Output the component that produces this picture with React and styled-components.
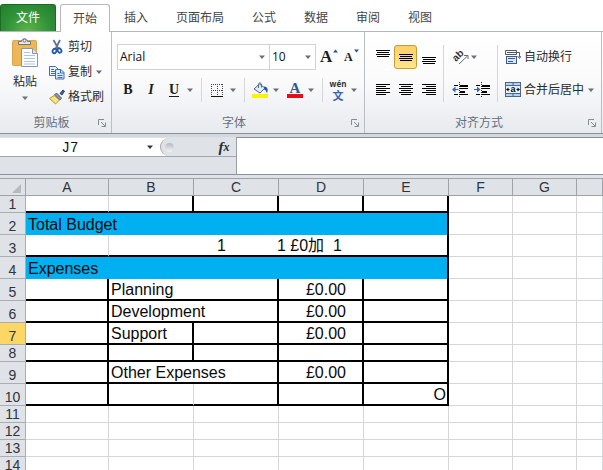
import React, { useState } from "react";
import styled, { createGlobalStyle, css } from "styled-components";

const GlobalStyle = createGlobalStyle`
  * { box-sizing: border-box; }
  body { margin: 0; background: #fff; }
  button, input, select {
    font: inherit; color: inherit; border: 0; padding: 0; margin: 0;
    background: none; outline-offset: -1px;
  }
`;

const ui = `"Open Sans", "Noto Sans CJK SC", sans-serif`;
const sans = `"Liberation Sans", "Noto Sans CJK SC", sans-serif`;
const serif = `"Liberation Serif", serif`;

const Window = styled.div`
  height: 100vh;
  overflow: hidden;
  display: flex;
  flex-direction: column;
  font: 12px/18px ${ui};
  color: #2b2b2b;
`;

/* Ribbon tabs */
const TabBar = styled.nav`
  display: flex;
  flex: none;
  height: 32px;
  padding-top: 4px;
  border-bottom: 1px solid #b3b7bd;
`;
const Tab = styled.button`
  flex: none;
  height: 27px;
  padding: 0 14px;
  color: #444;
`;
const FileTab = styled(Tab)`
  padding: 0 15px;
  margin-right: 4px;
  color: #fff;
  border: 1px solid #1d6b22;
  border-bottom: 0;
  border-radius: 3px 3px 0 0;
  background: radial-gradient(ellipse at 50% 100%, #5cb548, #2f9038 60%, #23802d);
`;
const ActiveTab = styled(Tab)`
  height: 28px;
  padding: 0 12px;
  border: 1px solid #b3b7bd;
  border-bottom: 0;
  border-radius: 3px 3px 0 0;
  background: #fff;
`;

/* Ribbon */
const Ribbon = styled.div`
  display: flex;
  flex: none;
  height: 102px;
  border-bottom: 1px solid #8b9098;
  background: linear-gradient(#fff 0%, #fbfbfc 45%, #e7eaee 100%);
`;
const Group = styled.section`
  display: flex;
  flex-direction: column;
  flex: 0 0 ${(p) => p.$width};
  border-right: 1px solid #b9bdc4;
`;
const GroupFooter = styled.footer`
  display: grid;
  grid-template-columns: 1fr auto;
  align-items: center;
  margin-top: auto;
  padding: 0 5px 1px;
  color: #66707e;
  text-align: center;
`;
const IconButton = styled.button`
  display: flex;
  flex: none;
  align-items: center;
  justify-content: center;
  gap: 4px;
  min-width: 16px;
  height: 24px;
  svg { display: block; flex: none; }
`;
const LauncherButton = styled(IconButton)`
  min-width: 8px;
  height: 18px;
`;
const Divider = styled.span`
  flex: none;
  width: 1px;
  align-self: stretch;
  background: #d3d6db;
`;

const ClipboardBody = styled.div`
  display: flex;
  padding: 3px 0 0 11px;
  gap: 10px;
`;
const PasteButton = styled.button`
  display: flex;
  flex-direction: column;
  align-items: center;
  width: 28px;
  padding-top: 2px;
  white-space: nowrap;
  gap: 5px;
  svg { display: block; }
`;
const CommandList = styled.div`
  display: flex;
  flex-direction: column;
  gap: 1px;
`;
const Command = styled(IconButton)`
  justify-content: flex-start;
  white-space: nowrap;
  gap: ${(p) => p.$gap || "3px"};
`;

const FontBody = styled.div`
  display: flex;
  flex-direction: column;
  gap: 8px;
  padding: 12px 4px 0 5px;
`;
const FontRow = styled.div`
  display: flex;
  align-items: center;
`;
const Picker = styled.label`
  position: relative;
  width: ${(p) => p.$width};
  height: 26px;
  border: 1px solid #d0d3d8;
  margin-right: -1px;
  background: #fff;
  color: #111;
  svg { position: absolute; right: 3px; top: 10px; pointer-events: none; }
`;
const Select = styled.select`
  appearance: none;
  width: 100%;
  height: 100%;
  padding: 0 2px;
`;
const FormatRow = styled.div`
  display: flex;
  align-items: center;
  gap: 7px;
  height: 24px;
  padding-left: 3px;
`;
const Letter = styled.span`
  width: 16px;
  text-align: center;
  font: bold ${(p) => p.$size || "14px"}/18px ${serif};
  color: #1c1c1c;
  ${(p) => p.$italic && css`font-style: italic;`}
  ${(p) => p.$underline && css`text-decoration: underline; text-underline-offset: 2px;`}
`;
const SizeButton = styled(IconButton)`
  gap: 1px;
  align-items: flex-start;
  margin-left: 5px;
  ${Letter} { width: auto; line-height: 24px; }
  svg { margin-top: 4px; }
`;
const Phonetic = styled.span`
  display: flex;
  flex-direction: column;
  width: 16px;
  align-items: center;
  font: bold 8px/10px ${ui};
  color: #333;
`;
const PhoneticBase = styled.span`
  font: bold 11px/12px "Noto Sans CJK SC", sans-serif;
  color: #3f62ad;
`;

const AlignBody = styled.div`
  display: flex;
  padding: 13px 0 0 6px;
`;
const AlignGrid = styled.div`
  display: grid;
  grid-template-columns: repeat(3, 23px);
  gap: 9px 0;
  margin-right: 3px;
`;
const AlignColumn = styled.div`
  display: flex;
  flex-direction: column;
  align-items: flex-start;
  gap: 9px;
  margin: 0 7px 0 8px;
`;
const WrapColumn = styled(AlignColumn)`
  margin: 0 0 0 7px;
`;
const IndentPair = styled.div`
  display: flex;
  gap: 6px;
`;
const AlignButton = styled(IconButton)`
  border-radius: 3px;
  ${(p) => p.$on && css`
    border: 1px solid #c79a3c;
    background: linear-gradient(#fbd069, #ffe58a);
  `}
`;

/* Formula bar */
const FormulaBar = styled.div`
  display: flex;
  flex: none;
  height: 44px;
  padding: 3px 0 3px;
  background: linear-gradient(#d3d7de 0 3px, #8b9098 3px 4px, #dfe3e8 4px);
`;
const NameArea = styled.div`
  flex: 0 0 237px;
  padding-top: 1px;
  border-right: 1px solid #9a9fa6;
  border-bottom: 1px solid #8b9098;
  background: #dfe2e7;
`;
const NameRow = styled.div`
  display: flex;
  height: 19px;
  background: #fff;
  border-bottom: 1px solid #a2a6ad;
`;
const NameBox = styled.input`
  width: 140px;
  padding-top: 2px;
  text-align: center;
  font: 14px/16px "Liberation Mono", monospace;
  color: #111;
`;
const NameCaret = styled(IconButton)`
  width: 20px;
  height: 18px;
`;
const FunctionStrip = styled.div`
  flex: 1;
  display: flex;
  align-items: center;
  justify-content: space-between;
  padding: 0 4px;
  border-left: 1px solid #a2a6ad;
  border-radius: 9px 0 0 9px;
  background: #dfe2e7;
`;
const Knob = styled.span`
  width: 9px;
  height: 9px;
  border-radius: 5px;
  background: linear-gradient(#b5b9bf, #f2f3f5);
`;
const FxButton = styled(IconButton)`
  height: 18px;
  font: italic bold 15px/18px ${serif};
  gap: 0;
`;
const FxSub = styled.span`
  font-size: 12px;
`;
const FormulaInput = styled.input`
  flex: 1;
  min-width: 0;
  align-self: stretch;
  padding: 0 4px;
  border-top: 1px solid #8b9098;
  border-bottom: 1px solid #8b9098;
  background: #fff;
`;

/* Sheet */
const Sheet = styled.table`
  flex: none;
  width: 100%;
  min-width: 603px;
  table-layout: fixed;
  border-collapse: separate;
  border-spacing: 0;
  font: 16px/20px ${sans};
  color: #0a0a0a;
`;
const Col = styled.col`
  width: ${(p) => p.$width};
`;
const ColumnHead = styled.th`
  height: 18px;
  padding: 0;
  border: solid #9ea3aa;
  border-width: 1px 1px 1px 0;
  background: #dfe2e7;
  font-size: 14px;
  line-height: 16px;
  font-weight: 400;
  color: #30343b;
`;
const Corner = styled(ColumnHead)`
  svg { display: block; margin: 3px 4px 0 auto; }
`;
const RowHead = styled.th`
  height: ${(p) => (p.$short ? "17px" : "22px")};
  padding: 0;
  vertical-align: bottom;
  border: solid #a9adb4;
  border-width: 0 1px 1px 0;
  background: ${(p) => (p.$active ? "#fdd766" : "#dfe2e7")};
  font-size: 14px;
  line-height: 16px;
  font-weight: 400;
  color: #30343b;
`;
const line = (kind) =>
  kind === "thick" ? "2px solid #000" : kind === "none" ? "0" : "1px solid #d4d6d9";
const Cell = styled.td`
  padding: 0 1px 0 2px;
  vertical-align: bottom;
  white-space: nowrap;
  line-height: ${(p) => (p.$bottom === "thick" ? "18px" : "20px")};
  border-right: ${(p) => line(p.$right)};
  border-bottom: ${(p) => line(p.$bottom)};
  ${(p) => p.$fill && css`background: #00b0f0;`}
  ${(p) => p.$align === "right" && css`text-align: right;`}
  ${(p) => p.$align === "money" && css`text-align: right; padding-right: 16px;`}
`;
const Entries = styled.div`
  display: flex;
  gap: 51px;
  padding-left: 106px;
  white-space: pre;
`;

/* Icons */
const Caret = ({ dark }) => (
  <svg width="8" height="5" viewBox="0 0 8 5" aria-hidden="true">
    <path d="M1 0.5h6L4 4z" fill={dark ? "#333" : "#6b6f75"} />
  </svg>
);
const LauncherIcon = () => (
  <svg width="8" height="8" viewBox="0 0 8 8" fill="none" stroke="#858c96" aria-hidden="true">
    <path d="M0.5 6V0.5H6M3 3l4 4M7.5 3.5v4h-4" />
  </svg>
);
const PasteIcon = () => (
  <svg width="27" height="31" viewBox="0 0 27 31" aria-hidden="true">
    <rect x="0.5" y="3.5" width="24" height="25" rx="1" fill="#edb758" stroke="#d9a552" />
    <path d="M6.500 7.500V4.500h3C9.500 1 15.500 1 15.500 4.500h3v3z" fill="#e4e7eb" stroke="#71767e" />
    <circle cx="12.500" cy="3.500" r="1.500" fill="#fff" stroke="#666" />
    <path d="M9.500 11.500h11l5 5v13h-16z" fill="#fdfdff" stroke="#8796ad" />
    <path d="M20.500 11.500v5h5" fill="#dfe7f3" stroke="#8796ad" />
    <path d="M12 15.500h6M12 18.500h11M12 21.500h11M12 24.500h11M12 27h11" stroke="#b3c4de" />
  </svg>
);
const CutIcon = () => (
  <svg width="16" height="16" viewBox="0 0 16 16" fill="none" aria-hidden="true">
    <path d="M4.500 1l5 9M11 1L6.500 10" stroke="#62738e" strokeWidth="1.800" />
    <ellipse cx="5.500" cy="12" rx="1.800" ry="2.300" stroke="#2558a8" strokeWidth="1.800" transform="rotate(25 5.500 12)" />
    <ellipse cx="10.500" cy="11.500" rx="1.800" ry="2.300" stroke="#2558a8" strokeWidth="1.800" transform="rotate(-30 10.500 11.500)" />
  </svg>
);
const CopyIcon = () => (
  <svg width="16" height="16" viewBox="0 0 16 16" stroke="#3f6eb4" aria-hidden="true">
    <path d="M0.500 2.500h6l3 3v6h-9z" fill="#eaf2fd" />
    <path d="M2 5.500h3M2 7.500h5M2 9.500h5" />
    <path d="M6.500 5.500h5.500l3 3v6.500h-8.500z" fill="#dce9fb" />
    <path d="M11.500 5.500v3.500h3.500M8.500 9.500h2M8.500 11.500h5M8.500 13.500h5" fill="none" />
  </svg>
);
const BrushIcon = () => (
  <svg width="16" height="16" viewBox="0 0 16 16" aria-hidden="true">
    <path d="M11 4.500l3-3.500 1.500 1.200L13 6z" fill="#455c94" stroke="#34487a" />
    <path d="M7.500 4L12.500 9l-1.500 2L5.500 6z" fill="#8a92a8" stroke="#596582" />
    <path d="M5 6.500l5.500 4.500L6.500 15 0.500 9.500z" fill="#f5dc6c" stroke="#bd9631" />
    <path d="M3 9l4.500 4M5 8l3.500 3" stroke="#fff5b8" />
  </svg>
);
const SizeMark = ({ down }) => (
  <svg width="5" height="4" viewBox="0 0 5 4" aria-hidden="true">
    <path d={down ? "M0 0.500h5L2.500 3.500z" : "M0 3.500h5L2.500 0.500z"} fill="#2d568e" />
  </svg>
);
const BorderIcon = () => (
  <svg width="16" height="16" viewBox="0 0 16 16" fill="none" aria-hidden="true">
    <path d="M2 2.500h12M2 8.500h12M2.500 2v11M8.500 2v11M13.500 2v11" stroke="#444" strokeDasharray="1 1" />
    <path d="M2 14.500h12" stroke="#111" />
  </svg>
);
const FillIcon = () => (
  <svg width="16" height="16" viewBox="0 0 16 16" aria-hidden="true">
    <path d="M2 7L7.500 2 13 6 8 11z" fill="#e2ecf9" stroke="#45628e" />
    <path d="M6.500 6V2.500C6.500 0 9.500 0.500 9.500 3v2.500" fill="none" stroke="#526a8c" />
    <path d="M12 4.500c3.500 0 4.500 3 3 6.500-1-1-1-3-3-3.500z" fill="#2b55a0" />
    <path d="M0 12h16v4H0z" fill="#fff200" />
  </svg>
);
const FontColorWrap = styled.span`
  display: flex;
  flex-direction: column;
  ${Letter} { line-height: 12px; color: #35558f; border-bottom: 4px solid #e80c14; }
`;
const LinesIcon = ({ rows }) => (
  <svg width="14" height="20" viewBox="0 0 14 20" aria-hidden="true">
    {rows.map(([x, y, w], i) => <rect key={i} x={x} y={y} width={w} height="1" fill="#000" />)}
  </svg>
);
const OrientIcon = () => (
  <svg width="18" height="20" viewBox="0 0 18 20" aria-hidden="true">
    <text x="4" y="15" fontFamily="Liberation Sans" fontWeight="700" fontSize="10" fill="#333" transform="rotate(-45 4 15)">ab</text>
    <path d="M7 17L15.500 9M12 8.500H16V12" fill="none" stroke="#686d75" />
  </svg>
);
const IndentIcon = ({ right }) => (
  <svg width="16" height="16" viewBox="0 0 16 16" aria-hidden="true">
    <path d="M2 3h4v1H2zM8 3h8v2H8zM8 6h8v1H8zM8 9h5v2H8zM2 12h4v1H2zM8 12h8v1H8z" fill="#000" />
    <path d="M7.500 0v16" stroke="#222" strokeDasharray="1 1" />
    <path d={right ? "M0 7h3V4.500L6.500 7.500 3 10.500V8H0z" : "M6.500 7h-3V4.500L0 7.500l3.500 3V8h3z"} fill="#3566b9" />
  </svg>
);
const WrapIcon = () => (
  <svg width="16" height="16" viewBox="0 0 16 16" fill="none" aria-hidden="true">
    <path d="M0.500 1.500h11v4H0.500z" fill="#f4f5f7" stroke="#545b66" />
    <path d="M2 3.500h12.500V8M12.500 7l2 2.500L16 7" stroke="#545b66" />
    <rect x="1.500" y="7.500" width="10" height="7" fill="#d9e7fb" stroke="#3e5b8e" />
    <path d="M3 9.500h7M3 12.500h5" stroke="#3e5b8e" />
  </svg>
);
const MergeIcon = () => (
  <svg width="16" height="16" viewBox="0 0 16 16" aria-hidden="true">
    <rect x="0.500" y="0.500" width="15" height="14" fill="#b8cff0" stroke="#4b6591" />
    <path d="M8 0v4M8 12v3" stroke="#4b6591" />
    <rect x="0.500" y="3.500" width="15" height="8" fill="#e9f1fd" stroke="#4b6591" />
    <path d="M1 7.500l2.500-2v1.500h1v1h-1v1.500zM15 7.500l-2.500-2v1.500h-1v1h1v1.500z" fill="#111" />
    <text x="8" y="10" textAnchor="middle" fontFamily="Liberation Sans" fontWeight="700" fontSize="9" fill="#111">a</text>
  </svg>
);

const stack = (y) => [0, 1, 2, 3].map((i) => [i % 2, y + i * 2, 14 - (i % 2) * 2]);
const ragged = (kind) =>
  [0, 1, 2, 3, 4, 5].map((i) => {
    const w = i % 2 ? 10 : 14;
    return [kind === "left" ? 0 : kind === "right" ? 14 - w : (14 - w) / 2, 4 + i * 2, w];
  });
const alignments = [
  ["顶端对齐", stack(3)],
  ["垂直居中", stack(7)],
  ["底端对齐", stack(10)],
  ["左对齐", ragged("left")],
  ["居中", ragged("center")],
  ["右对齐", ragged("right")],
];

function Footer({ label }) {
  return (
    <GroupFooter>
      <span>{label}</span>
      <LauncherButton aria-label={`${label}选项`}><LauncherIcon /></LauncherButton>
    </GroupFooter>
  );
}

const T = "thick";
const budget = (text, amount, split) => [
  { right: T, bottom: T },
  ...(split ? [{ text, right: T, bottom: T }, { right: T, bottom: T }] : [{ text, span: 2, right: T, bottom: T }]),
  { text: amount, align: "money", right: T, bottom: T },
  { right: T, bottom: T },
];
const empty = () => [{}, {}, {}, {}, {}];
const rows = [
  { short: true, cells: [{ bottom: T }, { right: T, bottom: T }, { right: T, bottom: T }, { right: T, bottom: T }, { right: T, bottom: T }] },
  { cells: [{ text: "Total Budget", span: 5, fill: true, right: T, bottom: "none" }] },
  { cells: [{ bottom: T }, { text: <Entries><span>1</span><span>1 £0加{"  "}1</span></Entries>, span: 4, right: T, bottom: T }] },
  { cells: [{ text: "Expenses", span: 5, fill: true, right: T, bottom: "none" }] },
  { cells: budget("Planning", "£0.00") },
  { cells: budget("Development", "£0.00") },
  { active: true, cells: budget("Support", "£0.00", true) },
  { short: true, cells: budget("", "", true) },
  { cells: budget("Other Expenses", "£0.00") },
  { cells: [{ right: T, bottom: T }, { bottom: T }, { right: T, bottom: T }, { right: T, bottom: T }, { text: "O", align: "right", right: T, bottom: T }] },
  { short: true, cells: empty() },
  { short: true, cells: empty() },
  { short: true, cells: empty() },
  { short: true, cells: empty() },
];

export default function App() {
  const [name, setName] = useState("J7");
  const [formula, setFormula] = useState("");
  const [valign, setValign] = useState("垂直居中");
  return (
    <Window>
      <GlobalStyle />
      <TabBar>
        <FileTab>文件</FileTab>
        <ActiveTab>开始</ActiveTab>
        {["插入", "页面布局", "公式", "数据", "审阅", "视图"].map((t) => <Tab key={t}>{t}</Tab>)}
      </TabBar>

      <Ribbon>
        <Group $width="112px">
          <ClipboardBody>
            <PasteButton><PasteIcon /><span>粘贴</span><Caret /></PasteButton>
            <CommandList>
              <Command><CutIcon />剪切</Command>
              <Command><CopyIcon />复制<Caret /></Command>
              <Command><BrushIcon />格式刷</Command>
            </CommandList>
          </ClipboardBody>
          <Footer label="剪贴板" />
        </Group>

        <Group $width="253px">
          <FontBody>
            <FontRow>
              <Picker $width="153px">
                <Select aria-label="字体"><option>Arial</option></Select>
                <Caret />
              </Picker>
              <Picker $width="47px">
                <Select aria-label="字号"><option>10</option></Select>
                <Caret />
              </Picker>
              <SizeButton aria-label="增大字号"><Letter $size="17px">A</Letter><SizeMark /></SizeButton>
              <SizeButton aria-label="减小字号"><Letter $size="12px">A</Letter><SizeMark down /></SizeButton>
            </FontRow>
            <FormatRow>
              <IconButton><Letter>B</Letter></IconButton>
              <IconButton><Letter $italic>I</Letter></IconButton>
              <IconButton><Letter $underline>U</Letter><Caret /></IconButton>
              <Divider />
              <IconButton aria-label="边框"><BorderIcon /><Caret /></IconButton>
              <Divider />
              <IconButton aria-label="填充颜色"><FillIcon /><Caret /></IconButton>
              <IconButton aria-label="字体颜色">
                <FontColorWrap><Letter $size="15px">A</Letter></FontColorWrap><Caret />
              </IconButton>
              <Divider />
              <IconButton>
                <Phonetic><span>wén</span><PhoneticBase>文</PhoneticBase></Phonetic><Caret />
              </IconButton>
            </FormatRow>
          </FontBody>
          <Footer label="字体" />
        </Group>

        <Group $width="237px">
          <AlignBody>
            <AlignGrid>
              {alignments.map(([label, lines]) => (
                <AlignButton key={label} aria-label={label} $on={valign === label} onClick={() => setValign(label)}>
                  <LinesIcon rows={lines} />
                </AlignButton>
              ))}
            </AlignGrid>
            <Divider />
            <AlignColumn>
              <Command $gap="0px" aria-label="方向"><OrientIcon /><Caret /></Command>
              <IndentPair>
                <IconButton aria-label="减少缩进量"><IndentIcon /></IconButton>
                <IconButton aria-label="增加缩进量"><IndentIcon right /></IconButton>
              </IndentPair>
            </AlignColumn>
            <Divider />
            <WrapColumn>
              <Command><WrapIcon />自动换行</Command>
              <Command><MergeIcon />合并后居中<Caret /></Command>
            </WrapColumn>
          </AlignBody>
          <Footer label="对齐方式" />
        </Group>
      </Ribbon>

      <FormulaBar>
        <NameArea>
          <NameRow>
            <NameBox aria-label="名称框" value={name} onChange={(e) => setName(e.target.value)} />
            <NameCaret aria-label="名称列表"><Caret dark /></NameCaret>
            <FunctionStrip>
              <Knob />
              <FxButton aria-label="插入函数">f<FxSub>x</FxSub></FxButton>
            </FunctionStrip>
          </NameRow>
        </NameArea>
        <FormulaInput aria-label="编辑栏" value={formula} onChange={(e) => setFormula(e.target.value)} />
      </FormulaBar>

      <Sheet>
        <colgroup>
          {["26px", "83px", "85px", "85px", "85px", "85px", "64px", "64px", "auto"].map((w, i) => <Col key={i} $width={w} />)}
        </colgroup>
        <thead>
          <tr>
            <Corner aria-label="全选">
              <svg width="9" height="9" viewBox="0 0 9 9" aria-hidden="true"><path d="M9 0v9H0z" fill="#b5b9c0" /></svg>
            </Corner>
            {["A", "B", "C", "D", "E", "F", "G", ""].map((c, i) => <ColumnHead key={i} scope="col">{c}</ColumnHead>)}
          </tr>
        </thead>
        <tbody>
          {rows.map((row, r) => (
            <tr key={r}>
              <RowHead scope="row" $short={row.short} $active={row.active}>{r + 1}</RowHead>
              {row.cells.map((c, i) => (
                <Cell key={i} colSpan={c.span} $right={c.right} $bottom={c.bottom} $fill={c.fill} $align={c.align}>
                  {c.text}
                </Cell>
              ))}
              <Cell /><Cell /><Cell />
            </tr>
          ))}
        </tbody>
      </Sheet>
    </Window>
  );
}
